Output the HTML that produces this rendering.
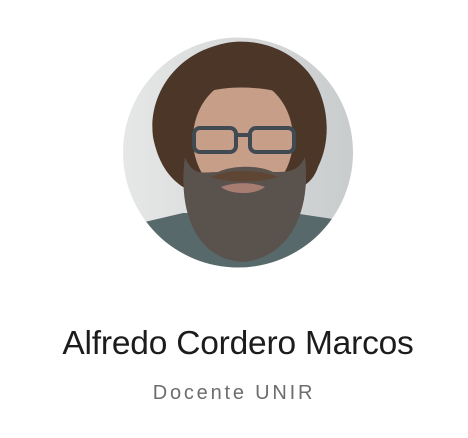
<!DOCTYPE html>
<html><head><meta charset="utf-8"><style>
html,body{margin:0;padding:0;background:#fff;width:468px;height:438px;overflow:hidden}
.av{position:absolute;left:123px;top:37px;width:230px;height:231px}
.n{position:absolute;left:4px;width:468px;top:325px;text-align:center;font-family:"Liberation Sans",sans-serif;font-size:33.5px;color:#1c1c1c;letter-spacing:-0.2px}
.r{position:absolute;left:0;width:468px;top:382px;text-align:center;font-family:"Liberation Sans",sans-serif;font-size:20px;color:#6d6d6d;letter-spacing:2.8px}
</style></head><body>
<svg class="av" viewBox="0 0 230 231">
<defs><clipPath id="c"><circle cx="115" cy="115.5" r="115"/></clipPath>
<linearGradient id="bg" x1="0" x2="1"><stop offset="0" stop-color="#e6e7e7"/><stop offset="1" stop-color="#c9cccd"/></linearGradient></defs>
<g clip-path="url(#c)">
<rect width="230" height="231" fill="url(#bg)"/>
<path d="M0 190 L60 176 L170 176 L230 185 L230 231 L0 231Z" fill="#58696c"/>
<path d="M30 100 C25 60 50 20 95 8 C120 0 160 5 185 35 C205 60 210 100 195 130 C190 145 180 150 175 150 L60 150 C45 140 35 125 30 100Z" fill="#4b3628"/>
<ellipse cx="120" cy="102" rx="50" ry="60" fill="#c79e88"/>
<path d="M70 60 C75 35 150 28 172 60 C150 50 100 45 70 60Z" fill="#4b3628"/>
<path d="M62 120 C70 140 80 135 95 135 C110 128 135 128 150 135 C165 135 175 135 182 120 C188 170 170 220 120 225 C70 222 55 170 62 120Z" fill="#5a524c"/>
<path d="M88 140 C105 132 135 132 155 140 C135 146 105 146 88 140Z" fill="#5e4534"/>
<path d="M98 150 C110 145 130 145 142 150 C132 158 108 158 98 150Z" fill="#a77d72"/>
<g fill="none" stroke="#3f4a52" stroke-width="4">
<rect x="71" y="91" width="42" height="24" rx="6"/>
<rect x="127" y="91" width="44" height="24" rx="6"/>
<path d="M113 98 L127 98"/></g>
</g></svg>
<div class="n">Alfredo Cordero Marcos</div>
<div class="r">Docente UNIR</div>
</body></html>
